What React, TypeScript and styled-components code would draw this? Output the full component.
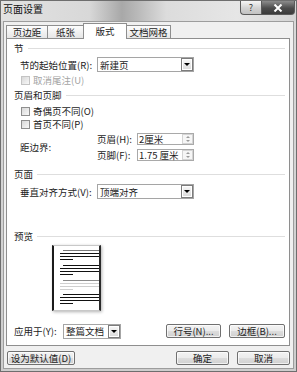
import React from 'react';
import styled, { createGlobalStyle, css } from 'styled-components';

const GlobalStyle = createGlobalStyle`
    html, body {
        margin: 0;
        padding: 0;
        background: #fff;
    }
    body {
        font-family: "Noto Sans CJK SC", "Liberation Sans", sans-serif;
        font-size: 9.5px;
        color: #1c1c1c;
    }
    * {
        box-sizing: border-box;
    }
`;

const Window = styled.div`
    display: flex;
    flex-direction: column;
    width: 297px;
    height: 372px;

    border: 1px solid #6e6e6e;
    background: linear-gradient(180deg, #dadada, #cdcdcd);
`;

const TitleBar = styled.div`
    display: flex;
    align-items: flex-start;
    height: 20px;

    background: linear-gradient(
        90deg,
        #e2e2e2 0%,
        #d8d8d8 30%,
        #a8a8a8 41%,
        #b8b8b8 46%,
        #dcdcdc 56%,
        #e6e6e6 80%,
        #d4d4d4 100%
    );
`;

const Title = styled.span`
    margin: 1px 0 0 2px;
    font-size: 10px;
    line-height: 14px;
    color: #111;
`;

const CaptionButton = styled.div<{ $close?: boolean }>`
    display: flex;
    align-items: center;
    justify-content: center;
    height: 14px;

    border: 1px solid #5a5a5a;
    border-top: none;
    font-size: 9px;

    ${(p) =>
        p.$close
            ? css`
                  width: 34px;
                  margin-right: 1px;
                  border-radius: 0 0 4px 0;
                  background: linear-gradient(180deg, #8c8c8c, #4c4c4c 55%, #3a3a3a);
              `
            : css`
                  width: 21px;
                  margin-left: auto;
                  border-right: none;
                  border-radius: 0 0 0 4px;
                  background: linear-gradient(180deg, #f6f6f6, #d2d2d2 55%, #c2c2c2);
                  color: #333;
              `}
`;

const Client = styled.div`
    display: flex;
    flex: 1;
    flex-direction: column;

    margin: 0 2px 2px 2px;
    padding: 1px 3px 3px 2px;

    border: 1px solid #9d9d9d;
    background: #f0f0f0;
`;

const TabStrip = styled.div`
    position: relative;
    z-index: 1;
    display: flex;
    align-items: flex-end;
    height: 16px;
    margin-bottom: -1px;
`;

const Tab = styled.div<{ $active?: boolean; $w: number }>`
    display: flex;
    align-items: center;
    justify-content: center;
    width: ${(p) => p.$w}px;
    margin-left: -1px;

    border: 1px solid #8e8e8e;
    border-bottom: none;

    ${(p) =>
        p.$active
            ? css`
                  height: 16px;
                  padding-bottom: 2px;
                  background: #fff;
              `
            : css`
                  height: 13px;
                  margin-bottom: 1px;
                  background: linear-gradient(180deg, #fdfdfd, #e6e6e6);
              `}

    &:first-child {
        margin-left: 0;
    }
`;

const Panel = styled.div`
    display: flex;
    flex: 1;
    flex-direction: column;

    padding: 2px 4px 7px 7px;

    border: 1px solid #8e8e8e;
    background: #fff;
`;

const SectionHeader = styled.div<{ $mt?: number }>`
    display: flex;
    align-items: center;
    gap: 4px;
    height: 14px;
    margin-top: ${(p) => p.$mt ?? 0}px;

    &::after {
        content: '';
        flex: 1;
        height: 1px;
        background: #dedede;
    }
`;

const FieldRow = styled.div<{ $mt?: number }>`
    display: flex;
    align-items: center;
    margin-top: ${(p) => p.$mt ?? 0}px;
    padding-left: 6px;
`;

const FieldLabel = styled.span<{ $w: number }>`
    flex-shrink: 0;
    width: ${(p) => p.$w}px;
    white-space: nowrap;
`;

const SelectBox = styled.div<{ $w: number }>`
    display: flex;
    align-items: center;
    width: ${(p) => p.$w}px;
    height: 15px;
    padding-left: 2px;

    border: 1px solid #a5a5a5;
    background: #fff;
`;

const SelectText = styled.span`
    flex: 1;
    white-space: nowrap;
`;

const DropButton = styled.span`
    display: flex;
    align-items: center;
    justify-content: center;
    width: 12px;
    height: 13px;

    border: 1px solid #7c7c7c;
    background: linear-gradient(180deg, #f8f8f8, #dadada);
    box-shadow: inset 0 0 0 1px #fff;

    &::after {
        content: '';
        border-left: 3px solid transparent;
        border-right: 3px solid transparent;
        border-top: 3px solid #000;
    }
`;

const CheckRow = styled.div<{ $mt?: number; $disabled?: boolean }>`
    display: flex;
    align-items: center;
    gap: 3px;
    height: 12px;
    margin-top: ${(p) => p.$mt ?? 0}px;
    padding-left: 7px;

    color: ${(p) => (p.$disabled ? '#a4a4a4' : 'inherit')};
`;

const CheckBox = styled.span<{ $disabled?: boolean }>`
    width: 9px;
    height: 9px;

    border: 1px solid ${(p) => (p.$disabled ? '#c4c4c4' : '#8f8f8f')};
    background: linear-gradient(135deg, #d8d8d8, #f8f8f8);
`;

const MarginGroup = styled.div`
    display: flex;
    align-items: center;
    margin-top: 2px;
    padding-left: 6px;
`;

const MarginFields = styled.div`
    display: flex;
    flex-direction: column;
    gap: 2px;
`;

const SpinRow = styled.div`
    display: flex;
    align-items: center;
`;

const SpinBox = styled.div`
    display: flex;
    align-items: center;
    width: 57px;
    height: 12px;
    padding-left: 1px;

    border: 1px solid #a9a9a9;
    background: #fff;
`;

const SpinText = styled.span`
    flex: 1;
    line-height: 10px;
    white-space: nowrap;
`;

const Spinner = styled.span`
    display: flex;
    flex-direction: column;
    align-items: center;
    justify-content: center;
    gap: 2px;
    width: 11px;
    height: 10px;

    border: 1px solid #d4d4d4;
    background: #f6f6f6;

    &::before,
    &::after {
        content: '';
        border-left: 2px solid transparent;
        border-right: 2px solid transparent;
    }
    &::before {
        border-bottom: 2px solid #9a9a9a;
    }
    &::after {
        border-top: 2px solid #9a9a9a;
    }
`;

const PreviewPage = styled.div`
    width: 49px;
    height: 66px;
    margin: 2px 0 0 38px;

    border-left: 2px solid #1a1a1a;
    border-right: 2px solid #2a2a2a;
    border-top: 1px solid #c8c8c8;
    border-bottom: 1px solid #c8c8c8;
    background: #fff;
    box-shadow: 1px 1px 3px rgba(0, 0, 0, 0.3);
`;

const ApplyRow = styled.div`
    display: flex;
    align-items: center;
    height: 14px;
    margin-top: auto;
`;

const ButtonGroup = styled.div`
    display: flex;
    gap: 8px;
    margin-left: auto;
`;

const PushButton = styled.div<{ $w: number }>`
    display: flex;
    align-items: center;
    justify-content: center;
    width: ${(p) => p.$w}px;
    height: 14px;

    border: 1px solid #707070;
    border-radius: 2px;
    background: linear-gradient(180deg, #f3f3f3 0%, #ebebeb 50%, #dddddd 51%, #d0d0d0 100%);
    box-shadow: inset 0 0 0 1px rgba(255, 255, 255, 0.7);
    white-space: nowrap;
`;

const Footer = styled.div`
    display: flex;
    align-items: center;
    gap: 8px;
    height: 14px;
    margin-top: 5px;
    padding-left: 1px;
`;

const FooterSpacer = styled.div`
    flex: 1;
`;

type PreviewLine = { y: number; x1: number; x2: number; color: string };

const groups: { top: number; first: string; rest: string }[] = [
    { top: 4, first: '#7a7a7a', rest: '#111' },
    { top: 19, first: '#111', rest: '#111' },
    { top: 34, first: '#8a8a8a', rest: '#cfcfcf' },
    { top: 48, first: '#111', rest: '#111' },
];

const previewLines: PreviewLine[] = groups.flatMap((g) => [
    { y: g.top, x1: 9, x2: 45, color: g.first },
    { y: g.top + 3, x1: 6, x2: 45, color: g.rest },
    { y: g.top + 6, x1: 6, x2: 45, color: g.rest },
    { y: g.top + 9, x1: 6, x2: 19, color: g.rest },
]);

const Select: React.FC<{ w: number; value: string }> = ({ w, value }) => (
    <SelectBox $w={w}>
        <SelectText>{value}</SelectText>
        <DropButton />
    </SelectBox>
);

const Spin: React.FC<{ label: string; value: string }> = ({ label, value }) => (
    <SpinRow>
        <FieldLabel $w={40}>{label}</FieldLabel>
        <SpinBox>
            <SpinText>{value}</SpinText>
            <Spinner />
        </SpinBox>
    </SpinRow>
);

const App: React.FC = () => (
    <>
        <GlobalStyle />
        <Window>
            <TitleBar>
                <Title>页面设置</Title>
                <CaptionButton>?</CaptionButton>
                <CaptionButton $close>
                    <svg width="10" height="8" viewBox="0 0 10 8">
                        <path d="M1.5 0.5 L8.5 7.5 M8.5 0.5 L1.5 7.5" stroke="#fff" strokeWidth="2" />
                    </svg>
                </CaptionButton>
            </TitleBar>
            <Client>
                <TabStrip>
                    <Tab $w={42}>页边距</Tab>
                    <Tab $w={37}>纸张</Tab>
                    <Tab $w={44} $active>
                        版式
                    </Tab>
                    <Tab $w={45}>文档网格</Tab>
                </TabStrip>
                <Panel>
                    <SectionHeader>节</SectionHeader>
                    <FieldRow $mt={2}>
                        <FieldLabel $w={77}>节的起始位置(R):</FieldLabel>
                        <Select w={97} value="新建页" />
                    </FieldRow>
                    <CheckRow $mt={2} $disabled>
                        <CheckBox $disabled />
                        取消尾注(U)
                    </CheckRow>

                    <SectionHeader $mt={2}>页眉和页脚</SectionHeader>
                    <CheckRow $mt={3}>
                        <CheckBox />
                        奇偶页不同(O)
                    </CheckRow>
                    <CheckRow $mt={1}>
                        <CheckBox />
                        首页不同(P)
                    </CheckRow>
                    <MarginGroup>
                        <FieldLabel $w={77}>距边界:</FieldLabel>
                        <MarginFields>
                            <Spin label="页眉(H):" value="2厘米" />
                            <Spin label="页脚(F):" value="1.75 厘米" />
                        </MarginFields>
                    </MarginGroup>

                    <SectionHeader $mt={5}>页面</SectionHeader>
                    <FieldRow $mt={3}>
                        <FieldLabel $w={77}>垂直对齐方式(V):</FieldLabel>
                        <Select w={97} value="顶端对齐" />
                    </FieldRow>

                    <SectionHeader $mt={30}>预览</SectionHeader>
                    <PreviewPage>
                        <svg width="45" height="64" viewBox="0 0 45 64">
                            {previewLines.map((l, i) => (
                                <line
                                    key={i}
                                    x1={l.x1}
                                    x2={l.x2}
                                    y1={l.y + 0.5}
                                    y2={l.y + 0.5}
                                    stroke={l.color}
                                    strokeWidth="1"
                                />
                            ))}
                        </svg>
                    </PreviewPage>

                    <ApplyRow>
                        <FieldLabel $w={49}>应用于(Y):</FieldLabel>
                        <Select w={58} value="整篇文档" />
                        <ButtonGroup>
                            <PushButton $w={55}>行号(N)...</PushButton>
                            <PushButton $w={56}>边框(B)...</PushButton>
                        </ButtonGroup>
                    </ApplyRow>
                </Panel>
                <Footer>
                    <PushButton $w={68}>设为默认值(D)</PushButton>
                    <FooterSpacer />
                    <PushButton $w={53}>确定</PushButton>
                    <PushButton $w={53}>取消</PushButton>
                </Footer>
            </Client>
        </Window>
    </>
);

export default App;
